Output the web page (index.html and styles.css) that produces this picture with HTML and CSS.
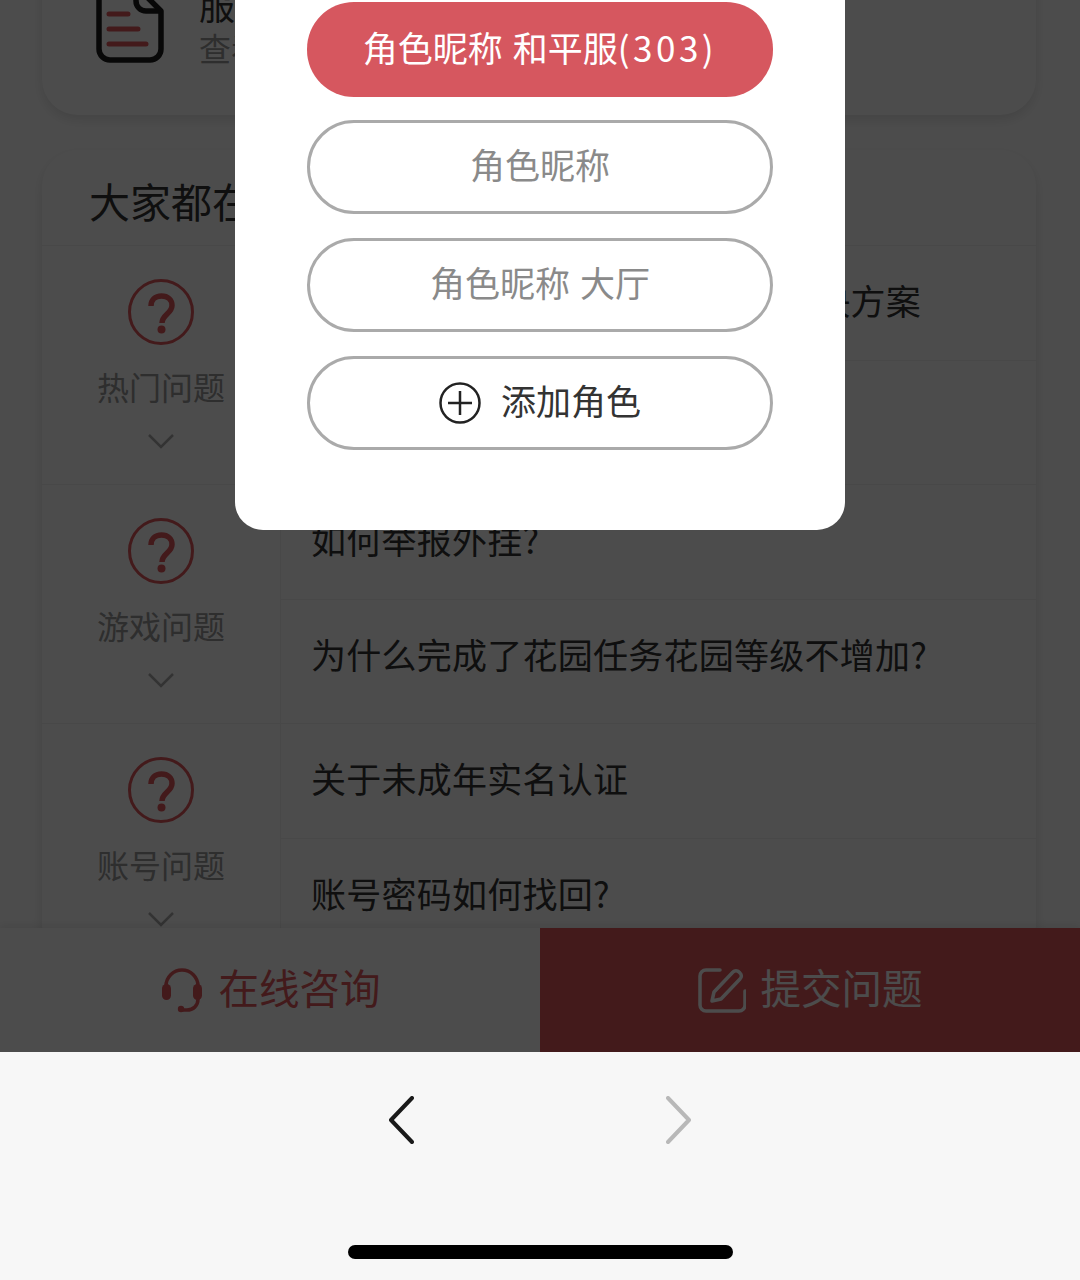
FILE: index.html
```html
<!DOCTYPE html>
<html lang="zh-CN">
<head>
    <meta charset="UTF-8">
    <meta name="viewport" content="width=device-width, initial-scale=1.0">
    <title>客服中心</title>
    <link rel="stylesheet" href="styles.css">
</head>
<body>
    <div class="screen">
        <div class="content">
            <div class="card top-card">
                <svg class="doc-icon" width="68" height="78" viewBox="0 0 68 78">
                    <path d="M12 3H42L65 26V64a11 11 0 0 1-11 11H14a11 11 0 0 1-11-11V14a11 11 0 0 1 11-11Z" fill="none" stroke="#1c1c1c" stroke-width="5.5" stroke-linejoin="round"/>
                    <path d="M40 3V16a10 10 0 0 0 10 10H65" fill="none" stroke="#1c1c1c" stroke-width="5.5"/>
                    <path d="M13 29H32M13 44H42M13 59H50" stroke="#e0575d" stroke-width="5" stroke-linecap="round"/>
                </svg>
                <div class="top-text">
                    <div class="top-title">服务记录</div>
                    <div class="top-sub">查看问题</div>
                </div>
            </div>

            <div class="card faq-card">
                <div class="faq-title">大家都在问</div>

                <div class="faq-group">
                    <div class="faq-side">
                        <svg class="help-icon" width="66" height="66" viewBox="0 0 66 66">
                            <circle cx="33" cy="33" r="31.5" fill="none" stroke="#e0575d" stroke-width="3"/>
                            <path d="M23 27c0-6 4-10 10.500-10s10.500 4 10.500 9.500c0 8-10 9-10 17.500" fill="none" stroke="#e0575d" stroke-width="5.500"/>
                            <circle cx="33.500" cy="50.500" r="4" fill="#e0575d"/>
                        </svg>
                        <div class="faq-label">热门问题</div>
                        <svg class="faq-arrow" width="28" height="16" viewBox="0 0 28 16"><path d="M2 2L14 14L26 2" fill="none" stroke="#aaa" stroke-width="2.5"/></svg>
                    </div>
                    <div class="faq-rows">
                        <div class="faq-row">iPhone登录不上或闪退的问题解决方案</div>
                        <div class="faq-row">如何联系客服?</div>
                    </div>
                </div>

                <div class="faq-group">
                    <div class="faq-side">
                        <svg class="help-icon" width="66" height="66" viewBox="0 0 66 66">
                            <circle cx="33" cy="33" r="31.5" fill="none" stroke="#e0575d" stroke-width="3"/>
                            <path d="M23 27c0-6 4-10 10.500-10s10.500 4 10.500 9.500c0 8-10 9-10 17.500" fill="none" stroke="#e0575d" stroke-width="5.500"/>
                            <circle cx="33.500" cy="50.500" r="4" fill="#e0575d"/>
                        </svg>
                        <div class="faq-label">游戏问题</div>
                        <svg class="faq-arrow" width="28" height="16" viewBox="0 0 28 16"><path d="M2 2L14 14L26 2" fill="none" stroke="#aaa" stroke-width="2.5"/></svg>
                    </div>
                    <div class="faq-rows">
                        <div class="faq-row">如何举报外挂?</div>
                        <div class="faq-row">为什么完成了花园任务花园等级不增加?</div>
                    </div>
                </div>

                <div class="faq-group">
                    <div class="faq-side">
                        <svg class="help-icon" width="66" height="66" viewBox="0 0 66 66">
                            <circle cx="33" cy="33" r="31.5" fill="none" stroke="#e0575d" stroke-width="3"/>
                            <path d="M23 27c0-6 4-10 10.500-10s10.500 4 10.500 9.500c0 8-10 9-10 17.500" fill="none" stroke="#e0575d" stroke-width="5.500"/>
                            <circle cx="33.500" cy="50.500" r="4" fill="#e0575d"/>
                        </svg>
                        <div class="faq-label">账号问题</div>
                        <svg class="faq-arrow" width="28" height="16" viewBox="0 0 28 16"><path d="M2 2L14 14L26 2" fill="none" stroke="#aaa" stroke-width="2.5"/></svg>
                    </div>
                    <div class="faq-rows">
                        <div class="faq-row">关于未成年实名认证</div>
                        <div class="faq-row">账号密码如何找回?</div>
                    </div>
                </div>
            </div>
        </div>

        <div class="footer">
            <div class="footer-btn chat-btn">
                <svg width="44" height="46" viewBox="0 0 44 46">
                    <path d="M6 24V19a16 16 0 0 1 32 0v5" fill="none" stroke="#e0575d" stroke-width="3.500"/>
                    <rect x="2" y="17" width="9" height="16" rx="4.500" fill="#e0575d"/>
                    <rect x="33" y="17" width="9" height="16" rx="4.500" fill="#e0575d"/>
                    <path d="M38 32c0 7-5 11-11 11h-6" fill="none" stroke="#e0575d" stroke-width="3.500"/>
                    <circle cx="21" cy="42" r="3.200" fill="#e0575d"/>
                </svg>
                <span class="footer-text">在线咨询</span>
            </div>
            <div class="footer-btn submit-btn">
                <svg width="48" height="46" viewBox="0 0 48 46">
                    <path d="M22 3H8a6 6 0 0 0-6 6v29a6 6 0 0 0 6 6h33a6 6 0 0 0 6-6V24" fill="none" stroke="#fff" stroke-width="3.500" stroke-linecap="round"/>
                    <path d="M14 34l2-9L35 5a4 4 0 0 1 6 0l1 1a4 4 0 0 1 0 6L23 32Z" fill="none" stroke="#fff" stroke-width="3.500" stroke-linejoin="round"/>
                </svg>
                <span class="footer-text">提交问题</span>
            </div>
        </div>

        <div class="mask"></div>

        <div class="modal">
            <div class="role-btn role-active"><span class="role-text">角色昵称 和平服<span class="role-server">(303)</span></span></div>
            <div class="role-btn"><span class="role-text">角色昵称</span></div>
            <div class="role-btn"><span class="role-text">角色昵称 大厅</span></div>
            <div class="role-btn role-add">
                <svg width="42" height="42" viewBox="0 0 42 42">
                    <circle cx="21" cy="21" r="19.500" fill="none" stroke="#222" stroke-width="2.500"/>
                    <path d="M9 21H33M21 9V33" stroke="#222" stroke-width="2.500"/>
                </svg>
                <span class="role-text">添加角色</span>
            </div>
        </div>
    </div>

    <div class="browser-bar">
        <div class="nav-arrows">
            <svg width="26" height="48" viewBox="0 0 26 48"><path d="M24 2L3 24L24 46" fill="none" stroke="#1a1a1a" stroke-width="4" stroke-linecap="round" stroke-linejoin="round"/></svg>
            <svg width="26" height="48" viewBox="0 0 26 48"><path d="M2 2L23 24L2 46" fill="none" stroke="#b8b8b8" stroke-width="4" stroke-linecap="round" stroke-linejoin="round"/></svg>
        </div>
        <div class="home-bar"></div>
    </div>
</body>
</html>
```

FILE: styles.css
```css
body {
    font-family: "Noto Sans CJK SC", "Noto Sans", sans-serif;
    margin: 0;
    background: #f7f7f7;
}

.screen {
    position: relative;
    height: 1052px;
    overflow: hidden;
    background: #fff;
}

.content {
    padding: 0 44px 0 42px;
}

.card {
    background: #fff;
    border-radius: 36px;
    box-shadow: 0 5px 12px rgba(0,0,0,0.11);
}

.top-card {
    display: flex;
    align-items: flex-start;
    height: 175px;
    margin-top: -60px;
    padding: 45px 0 0 54px;
    box-sizing: border-box;
}

.doc-icon {
    flex: none;
}

.top-text {
    margin-left: 35px;
    margin-top: -3px;
}

.top-title {
    font-size: 36px;
    line-height: 44px;
    color: #333;
}

.top-sub {
    font-size: 32px;
    line-height: 42px;
    color: #999;
}

.faq-card {
    margin-top: 35px;
}

.faq-title {
    height: 95px;
    padding-left: 47px;
    font-size: 41px;
    line-height: 100px;
    color: #333;
}

.faq-group {
    display: flex;
    height: 239px;
    border-top: 1px solid #f2f2f2;
    box-sizing: border-box;
}

.faq-side {
    width: 239px;
    flex: none;
    display: flex;
    flex-direction: column;
    align-items: center;
    padding-top: 33px;
    box-sizing: border-box;
    border-right: 1px solid #f2f2f2;
}

.faq-label {
    margin-top: 18px;
    font-size: 32px;
    line-height: 46px;
    color: #999;
}

.faq-arrow {
    margin-top: 24px;
}

.faq-rows {
    flex: 1;
    display: flex;
    flex-direction: column;
}

.faq-row {
    padding: 29px 0 0 30px;
    font-size: 35px;
    line-height: 50px;
    letter-spacing: 0.25px;
    color: #333;
    box-sizing: border-box;
}

.faq-row:first-child {
    height: 115px;
    border-bottom: 1px solid #f2f2f2;
}

.footer {
    position: absolute;
    left: 0;
    right: 0;
    bottom: 0;
    height: 124px;
    display: flex;
    font-size: 40.5px;
    box-shadow: 0 -3px 8px rgba(0,0,0,0.08);
}

.footer-btn {
    flex: 1;
    display: flex;
    align-items: center;
    justify-content: center;
    gap: 15px;
}

.footer-text {
    padding-bottom: 8px;
}

.chat-btn {
    background: #fff;
    color: #e0575d;
}

.submit-btn {
    background: #e0575d;
    color: #fff;
}

.mask {
    position: absolute;
    inset: 0;
    background: rgba(0,0,0,0.7);
}

.modal {
    position: absolute;
    top: 0;
    left: 235px;
    width: 610px;
    height: 530px;
    padding: 2px 72px 0;
    box-sizing: border-box;
    display: flex;
    flex-direction: column;
    gap: 24px;
    background: #fff;
    border-radius: 0 0 28px 28px;
}

.role-btn {
    height: 94px;
    display: flex;
    align-items: center;
    justify-content: center;
    gap: 20px;
    box-sizing: border-box;
    border: 3px solid #aaa;
    border-radius: 47px;
    font-size: 35px;
    color: #8a8a8a;
}

.role-text {
    padding-bottom: 7px;
    word-spacing: 2px;
}

.role-server {
    letter-spacing: 3.5px;
}

.role-active {
    height: 95px;
    margin-bottom: -1px;
    background: #d6575f;
    border: none;
    color: #fff;
}

.role-add {
    color: #333;
}

.browser-bar {
    height: 228px;
    position: relative;
    background: #f7f7f7;
}

.nav-arrows {
    display: flex;
    justify-content: center;
    gap: 252px;
    padding-top: 44px;
}

.home-bar {
    position: absolute;
    left: 348px;
    top: 193px;
    width: 385px;
    height: 14px;
    border-radius: 7px;
    background: #000;
}
```
